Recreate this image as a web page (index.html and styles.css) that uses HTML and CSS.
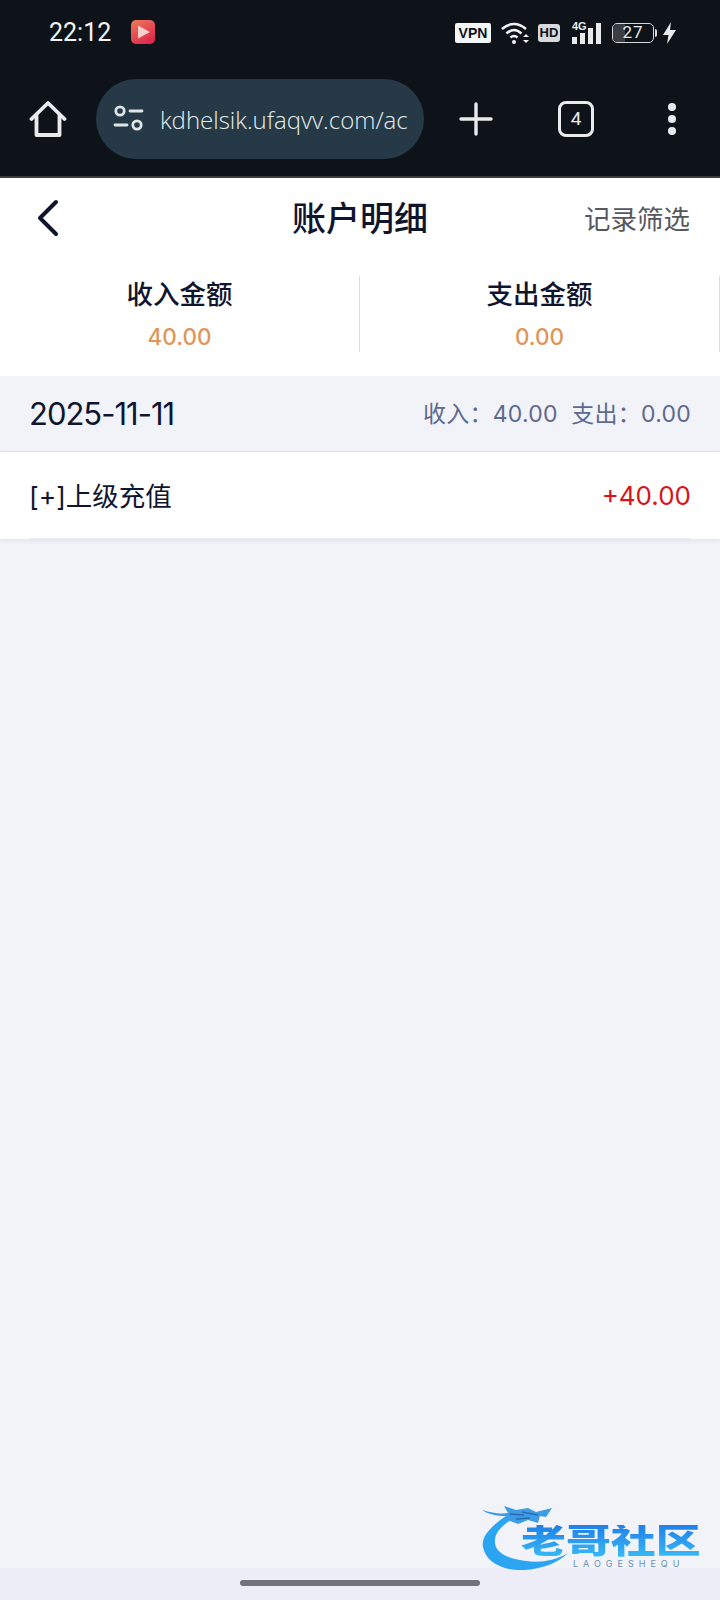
FILE: index.html
```html
<!DOCTYPE html>
<html lang="zh-CN">
<head>
    <meta charset="UTF-8">
    <meta name="viewport" content="width=device-width, initial-scale=1.0">
    <title>账户明细</title>
    <link rel="stylesheet" href="styles.css">
</head>
<body>
    <div class="phone">
        <!-- status bar -->
        <div class="status-bar">
            <div class="status-left">
                <span class="time">22:12</span>
                <svg class="app-icon" width="24" height="24" viewBox="0 0 24 24">
                    <defs>
                        <linearGradient id="appGrad" x1="0" y1="0" x2="0.6" y2="1">
                            <stop offset="0" stop-color="#ee7a5a"/>
                            <stop offset="1" stop-color="#de2a4e"/>
                        </linearGradient>
                    </defs>
                    <rect width="24" height="24" rx="5" fill="url(#appGrad)"/>
                    <path d="M7 5.5 L19 12 L7 18.5 Z" fill="#fbd0cc"/>
                </svg>
            </div>
            <div class="status-right">
                <span class="vpn">VPN</span>
                <svg width="30" height="24" viewBox="0 0 30 24" fill="none" stroke="#f0f1f2" stroke-width="2.6">
                    <path d="M1 8 Q13 -2 25 8"/>
                    <path d="M5.500 12.500 Q13 5.500 20.500 12.500"/>
                    <path d="M9.500 16.500 Q13 13.500 16.500 16.500"/>
                    <circle cx="13" cy="21" r="2" fill="#f0f1f2" stroke="none"/>
                    <path d="M22 16 L25 13 L28 16 Z M22 19 L25 22 L28 19 Z" fill="#f0f1f2" stroke="none"/>
                </svg>
                <span class="hd">HD</span>
                <div class="signal">
                    <span class="signal-label">4G</span>
                    <svg width="30" height="21" viewBox="0 0 30 21" fill="#e8e9ea">
                        <rect x="0" y="14" width="5" height="7"/>
                        <rect x="8" y="10" width="5" height="11"/>
                        <rect x="16" y="5" width="5" height="16"/>
                        <rect x="24" y="0" width="5" height="21"/>
                    </svg>
                </div>
                <div class="battery">
                    <div class="battery-body"><span class="battery-fill"></span><span class="battery-num">27</span></div>
                    <span class="battery-tip"></span>
                </div>
                <svg width="13" height="22" viewBox="0 0 13 22" fill="#e8e9ea">
                    <path d="M8 0 L0 13 L5.500 13 L4 22 L13 8 L7 8 Z"/>
                </svg>
            </div>
        </div>

        <!-- browser toolbar -->
        <div class="toolbar">
            <svg class="home-icon" width="38" height="38" viewBox="0 0 38 38" fill="none" stroke="#e9eaec" stroke-width="3.800" stroke-linejoin="round" stroke-linecap="round">
                <path d="M2.500 19 L19 3 L35.500 19"/>
                <path d="M7.500 15 V35 H30.500 V15"/>
            </svg>
            <div class="url-box">
                <svg width="32" height="28" viewBox="0 0 32 28" fill="none" stroke="#dfe5e8" stroke-width="2.800" stroke-linecap="round">
                    <circle cx="7" cy="6" r="4.200"/>
                    <path d="M17 6 H29"/>
                    <path d="M2 20 H14"/>
                    <circle cx="24" cy="20" r="4.200"/>
                </svg>
                <span class="url-text">kdhelsik.ufaqvv.com/ac</span>
            </div>
            <svg class="plus-icon" width="34" height="34" viewBox="0 0 34 34" stroke="#e9eaec" stroke-width="3.400" stroke-linecap="round">
                <path d="M17 2 V32 M2 17 H32"/>
            </svg>
            <span class="tab-count">4</span>
            <div class="more-dots"><span></span><span></span><span></span></div>
        </div>

        <!-- page -->
        <div class="page">
            <header class="nav">
                <svg class="back-icon" width="24" height="38" viewBox="0 0 24 38" fill="none" stroke="#10152e" stroke-width="4" stroke-linecap="round" stroke-linejoin="round">
                    <path d="M20 3 L4 19 L20 35"/>
                </svg>
                <h1>账户明细</h1>
                <span class="nav-action">记录筛选</span>
            </header>

            <section class="summary">
                <div class="summary-item">
                    <span class="summary-label">收入金额</span>
                    <span class="summary-value">40.00</span>
                </div>
                <div class="summary-item">
                    <span class="summary-label">支出金额</span>
                    <span class="summary-value">0.00</span>
                </div>
            </section>

            <div class="date-bar">
                <span class="date">2025-11-11</span>
                <span class="date-total">收入：40.00&nbsp;&nbsp;支出：0.00</span>
            </div>

            <div class="record">
                <div class="record-row">
                    <span class="record-name">[+]上级充值</span>
                    <span class="record-amount">+40.00</span>
                </div>
            </div>
        </div>

        <!-- watermark -->
        <div class="watermark">
            <svg class="watermark-arc" width="112" height="72" viewBox="0 0 112 72" fill="none">
                <path d="M26 13 C10 24 1 34 3 44 C6 60 24 68 44 67 C62 66 78 60 88 50 C74 58 60 60 46 58 C28 56 16 50 15 40 C14 30 22 22 34 15 Z" fill="#2ba5f2"/>
                <path d="M2 7 C12 10 20 11 28 10 L24 3 L36 7 L48 5 L56 9 L72 5 L66 14 L60 13 L58 20 L48 17 L38 21 L30 18 L26 13 C16 13 8 11 2 7 Z" fill="#3c9ce4"/>
                <path d="M30 11 L44 12 M42 9 L58 12 M36 16 L50 15" stroke="#2a6db5" stroke-width="1.500"/>
            </svg>
            <span class="watermark-title">老哥社区</span>
            <span class="watermark-sub">LAOGESHEQU</span>
        </div>

        <!-- gesture bar -->
        <div class="gesture-bar"><span class="gesture-handle"></span></div>
    </div>
</body>
</html>
```

FILE: styles.css
```css
* {
    box-sizing: border-box;
}
body {
    margin: 0;
    padding: 0;
    font-family: Inter, "Noto Sans CJK SC", sans-serif;
    background-color: #f1f3f9;
}
.phone {
    position: relative;
    width: 720px;
    height: 1600px;
    display: flex;
    flex-direction: column;
    overflow: hidden;
}

/* status bar */
.status-bar {
    height: 64px;
    padding: 20px 44px 0 49px;
    display: flex;
    justify-content: space-between;
    align-items: flex-start;
    background-color: #0e131a;
    color: #f2f3f4;
}
.status-left {
    display: flex;
    align-items: center;
    gap: 20px;
    height: 24px;
}
.time {
    font-family: Roboto, sans-serif;
    font-size: 25px;
}
.status-right {
    display: flex;
    align-items: center;
    height: 24px;
    margin-top: 1px;
}
.vpn {
    width: 36px;
    height: 20px;
    margin-right: 10px;
    background: #f4f5f6;
    border-radius: 2px;
    color: #0e131a;
    font-family: "Liberation Sans", sans-serif;
    font-size: 14px;
    font-weight: 700;
    line-height: 20px;
    text-align: center;
}
.hd {
    width: 22px;
    height: 18px;
    margin-left: 7px;
    background: #d8d9db;
    border-radius: 3px;
    color: #0e131a;
    font-family: "Liberation Sans", sans-serif;
    font-size: 13px;
    font-weight: 700;
    line-height: 18px;
    text-align: center;
}
.signal {
    position: relative;
    width: 30px;
    height: 21px;
    margin-left: 12px;
}
.signal svg {
    display: block;
}
.signal-label {
    position: absolute;
    left: 0;
    top: -3px;
    padding-right: 1px;
    background: #0e131a;
    color: #e8e9ea;
    font-family: "Liberation Sans", sans-serif;
    font-size: 11px;
    font-weight: 700;
    line-height: 13px;
}
.battery {
    display: flex;
    align-items: center;
    margin-left: 10px;
    margin-right: 6px;
}
.battery-body {
    position: relative;
    width: 42px;
    height: 20px;
    border: 1.500px solid #d6d7d9;
    border-radius: 5px;
    overflow: hidden;
}
.battery-fill {
    position: absolute;
    left: 0;
    top: 0;
    bottom: 0;
    width: 12px;
    background: #3a3d42;
}
.battery-num {
    position: relative;
    display: block;
    color: #e8e9ea;
    font-family: Roboto, sans-serif;
    font-size: 17px;
    line-height: 17px;
    letter-spacing: 1px;
    text-align: center;
}
.battery-tip {
    width: 2px;
    height: 8px;
    margin-left: 1px;
    background: #d6d7d9;
    border-radius: 0 2px 2px 0;
}

/* browser toolbar */
.toolbar {
    height: 114px;
    padding: 16px 0 18px 29px;
    display: flex;
    align-items: center;
    background-color: #0e131a;
    border-bottom: 2px solid #3b3d41;
}
.home-icon {
    flex: none;
}
.url-box {
    flex: none;
    width: 328px;
    height: 80px;
    margin-left: 29px;
    padding: 0 10px 0 17px;
    display: flex;
    align-items: center;
    gap: 15px;
    background-color: #253a46;
    border-radius: 40px;
}
.url-box svg {
    flex: none;
}
.url-text {
    color: #e6ecef;
    font-family: "Open Sans", sans-serif;
    font-size: 24px;
    font-weight: 300;
    white-space: nowrap;
}
.plus-icon {
    flex: none;
    margin-left: 35px;
}
.tab-count {
    flex: none;
    width: 36px;
    height: 36px;
    margin-left: 65px;
    border: 3.500px solid #e9eaec;
    border-radius: 8px;
    color: #e9eaec;
    font-family: Roboto, sans-serif;
    font-size: 19px;
    line-height: 29px;
    text-align: center;
}
.more-dots {
    margin-left: 74px;
    display: flex;
    flex-direction: column;
    gap: 4px;
}
.more-dots span {
    width: 8px;
    height: 8px;
    background: #e9eaec;
    border-radius: 50%;
}

/* page */
.page {
    flex: 1;
}
.nav {
    height: 80px;
    padding: 0 30px 0 36px;
    display: flex;
    align-items: center;
    justify-content: space-between;
    background: #fff;
    position: relative;
}
.nav h1 {
    position: absolute;
    left: 0;
    right: 0;
    margin: -3px 0 0;
    color: #10152e;
    font-size: 34px;
    font-weight: 500;
    text-align: center;
    pointer-events: none;
}
.nav-action {
    margin-top: -2px;
    color: #55585f;
    font-size: 26.500px;
}
.summary {
    height: 118px;
    padding-top: 18px;
    display: flex;
    align-items: flex-start;
    background: #fff;
}
.summary-item {
    flex: 1;
    height: 76px;
    display: flex;
    flex-direction: column;
    align-items: center;
    border-right: 1px solid #dcdde0;
}
.summary-label {
    color: #10152e;
    font-size: 26.500px;
    font-weight: 500;
    line-height: 36px;
}
.summary-value {
    margin-top: 10px;
    color: #e0965a;
    font-size: 22.500px;
    font-weight: 500;
    line-height: 30px;
}
.date-bar {
    height: 76px;
    padding: 0 29px;
    display: flex;
    align-items: center;
    justify-content: space-between;
    border-bottom: 1px solid #dfe0e4;
    background-color: #f1f3f9;
}
.date {
    color: #10152e;
    font-size: 31px;
    letter-spacing: -1px;
}
.date-total {
    padding-bottom: 4px;
    color: #5e6a8c;
    font-size: 23px;
    letter-spacing: 0.250px;
}
.record {
    background: #fff;
    padding: 0 29px;
    box-shadow: 0 2px 5px rgba(60, 70, 100, 0.08);
}
.record-row {
    height: 87px;
    display: flex;
    align-items: center;
    justify-content: space-between;
    border-bottom: 1px solid #eceef2;
}
.record-name {
    padding-bottom: 2px;
    color: #10152e;
    font-size: 26.500px;
}
.record-amount {
    color: #d9141c;
    font-size: 26px;
}

/* watermark lies over the page */
.watermark {
    position: absolute;
    left: 480px;
    top: 1503px;
    width: 232px;
    height: 88px;
}
.watermark-arc {
    position: absolute;
    left: 0;
    top: 0;
}
.watermark-title {
    position: absolute;
    left: 41px;
    top: 22px;
    color: #2a9df0;
    background: linear-gradient(#1f7fe8, #38baf6);
    -webkit-background-clip: text;
    background-clip: text;
    -webkit-text-fill-color: transparent;
    font-size: 34px;
    font-weight: 900;
    line-height: 32px;
    white-space: nowrap;
    transform: scaleX(1.320);
    transform-origin: left center;
}
.watermark-sub {
    position: absolute;
    left: 93px;
    top: 55px;
    color: #6a8fb5;
    font-size: 9px;
    line-height: 12px;
    letter-spacing: 5px;
    white-space: nowrap;
}

/* gesture bar */
.gesture-bar {
    height: 32px;
    padding-top: 12px;
    display: flex;
    justify-content: center;
    background-color: #ecedf6;
}
.gesture-handle {
    width: 240px;
    height: 6px;
    background: #737479;
    border-radius: 3px;
}
```
